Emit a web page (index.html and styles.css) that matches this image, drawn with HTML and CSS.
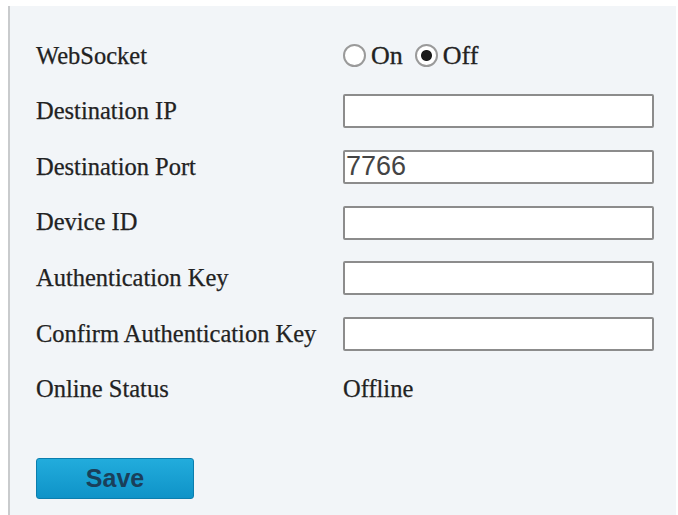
FILE: index.html
```html
<!DOCTYPE html>
<html lang="en">
<head>
  <meta charset="UTF-8">
  <meta name="viewport" content="width=device-width, initial-scale=1.0">
  <title>WebSocket Settings</title>
  <link rel="stylesheet" href="styles.css">
</head>
<body>
  <div class="panel">
    <!-- Settings form -->
    <form class="settings">
      <div class="row">
        <label class="label">WebSocket</label>
        <div class="radios">
          <label class="radio"><input type="radio" name="ws" value="on"> On</label>
          <label class="radio"><input type="radio" name="ws" value="off" checked> Off</label>
        </div>
      </div>
      <div class="row">
        <label class="label" for="dest-ip">Destination IP</label>
        <input id="dest-ip" class="field" type="text">
      </div>
      <div class="row">
        <label class="label" for="dest-port">Destination Port</label>
        <input id="dest-port" class="field" type="text" value="7766">
      </div>
      <div class="row">
        <label class="label" for="device-id">Device ID</label>
        <input id="device-id" class="field" type="text">
      </div>
      <div class="row">
        <label class="label" for="auth-key">Authentication Key</label>
        <input id="auth-key" class="field" type="password">
      </div>
      <div class="row">
        <label class="label" for="auth-confirm">Confirm Authentication Key</label>
        <input id="auth-confirm" class="field" type="password">
      </div>
      <div class="row">
        <span class="label">Online Status</span>
        <span class="value">Offline</span>
      </div>

      <button type="button" class="save-btn">Save</button>
    </form>
  </div>
</body>
</html>
```

FILE: styles.css
```css
/* Basic Styles */
body {
  margin: 0;
  padding: 0;
  background-color: #fff;
  font-family: "Liberation Serif", "Times New Roman", serif;
  color: #222;
}

.panel {
  margin: 6px 2px 0 8px;
  height: 509px;
  box-sizing: border-box;
  border-left: 2px solid #c9cbcd;
  background-color: #f2f5f8;
  padding: 22px 0 0 26px;
}

/* Form rows */
.row {
  display: grid;
  grid-template-columns: 307px 311px;
  align-items: center;
  height: 55.6px;
}

.label,
.value {
  font-size: 24.5px;
  line-height: 1;
  -webkit-text-stroke: 0.25px #222;
}

.field {
  width: 311px;
  height: 34px;
  box-sizing: border-box;
  margin: 0;
  padding: 0 1px;
  border: 2px solid #8c8c8c;
  border-radius: 2px;
  background-color: #fff;
  font-family: "Liberation Sans", Arial, sans-serif;
  font-size: 27px;
  color: #444;
  outline: none;
}

/* Radio buttons */
.radios {
  display: flex;
  align-items: center;
  gap: 12px;
  font-size: 26px;
  -webkit-text-stroke: 0.3px #222;
}

.radio {
  display: flex;
  align-items: center;
  gap: 5px;
}

.radio input {
  appearance: none;
  -webkit-appearance: none;
  width: 23px;
  height: 23px;
  margin: 0;
  border: 2px solid #9a9a9a;
  border-radius: 50%;
  background-color: #fff;
}

.radio input:checked {
  background: radial-gradient(circle, #1a1a1a 0 5px, #fff 6px);
}

/* Save button */
.save-btn {
  display: block;
  margin-top: 41px;
  width: 158px;
  height: 41px;
  border: 1px solid #0b7eae;
  border-radius: 3px;
  background: linear-gradient(#22acdc, #0f93c8);
  font-family: "Liberation Sans", Arial, sans-serif;
  font-size: 25px;
  font-weight: bold;
  color: #1a3f5a;
  cursor: pointer;
}

.save-btn:hover {
  background: linear-gradient(#2db6e4, #139bd0);
}
```
